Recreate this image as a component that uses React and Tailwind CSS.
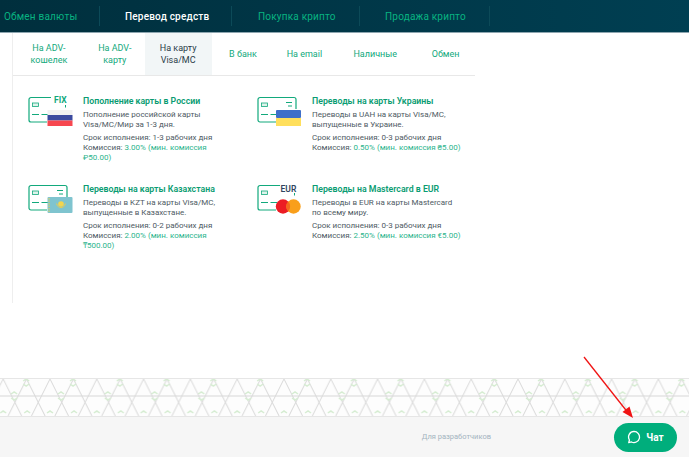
import React from "react";

const NAV = [
  { label: "Обмен валюты", w: "w-[100px]", pl: "pl-[4px]" },
  { label: "Перевод средств", w: "w-[132px]", active: true, pl: "pl-[25px]" },
  { label: "Покупка крипто", w: "w-[128px]", pl: "pl-[26px]" },
  { label: "Продажа крипто", w: "w-[130px]", pl: "pl-[25px]" },
];

const TABS = [
  { label: "На ADV-\nкошелек", w: "w-[72px]" },
  { label: "На ADV-\nкарту", w: "w-[60px]" },
  { label: "На карту\nVisa/MC", w: "w-[67px]", active: true },
  { label: "В банк", w: "w-[63px]" },
  { label: "На email", w: "w-[60px]" },
  { label: "Наличные", w: "w-[82px]" },
  { label: "Обмен", w: "w-[59px]" },
];

const CARDS = [
  {
    icon: "ru",
    title: "Пополнение карты в России",
    desc: ["Пополнение российской карты", "Visa/MC/Мир за 1-3 дня."],
    time: "1-3 рабочих дня",
    fee: ["3.00% (мин. комиссия", "₽50.00)"],
  },
  {
    icon: "ua",
    title: "Переводы на карты Украины",
    desc: ["Переводы в UAH на карты Visa/MC,", "выпущенные в Украине."],
    time: "0-3 рабочих дня",
    fee: ["0.50% (мин. комиссия ₴5.00)"],
  },
  {
    icon: "kz",
    title: "Переводы на карты Казахстана",
    desc: ["Переводы в KZT на карты Visa/MC,", "выпущенные в Казахстане."],
    time: "0-2 рабочих дня",
    fee: ["2.00% (мин. комиссия", "₸500.00)"],
  },
  {
    icon: "eur",
    title: "Переводы на Mastercard в EUR",
    desc: ["Переводы в EUR на карты Mastercard", "по всему миру."],
    time: "0-3 рабочих дня",
    fee: ["2.50% (мин. комиссия €5.00)"],
  },
];

function CardIcon({ type }) {
  const open = type === "ru" || type === "eur";
  const green = "#12a97c";
  return (
    <svg width="46" height="32" viewBox="0 0 46 32" className="shrink-0">
      {open ? (
        <path d="M23 1.500H3a2 2 0 0 0-2 2V24a2 2 0 0 0 2 2h16" fill="none" stroke={green} strokeWidth="1.200" />
      ) : (
        <path d="M19 26H3a2 2 0 0 1-2-2V3.500a2 2 0 0 1 2-2h34a2 2 0 0 1 2 2V13" fill="none" stroke={green} strokeWidth="1.200" />
      )}
      <rect x="4.500" y="7" width="6" height="3.500" fill="#dff3ec" stroke={green} strokeWidth="0.800" />
      <path d="M4 18.500h7M13.500 18.500h7" stroke={green} strokeWidth="1.200" />
      {!open && <path d="M29 6.500h6M31 10h4" stroke={green} strokeWidth="1" />}
      {open && <path d="M37.500 9v2.500" stroke={green} strokeWidth="1" />}
      {type === "ru" && (
        <>
          <text x="26" y="7" fontSize="8.500" fontWeight="700" fill={green} fontFamily="Roboto, sans-serif">FIX</text>
          <rect x="19.500" y="14" width="25" height="5.500" fill="#f1f1f1" />
          <rect x="19.500" y="19" width="25" height="5.500" fill="#3b4a9f" />
          <rect x="19.500" y="24.500" width="25" height="5.500" fill="#f7474f" />
        </>
      )}
      {type === "ua" && (
        <>
          <rect x="19" y="14" width="25" height="8" fill="#3f6fc9" rx="1" />
          <rect x="19" y="22" width="25" height="8" fill="#ffdf5c" />
        </>
      )}
      {type === "kz" && (
        <>
          <rect x="19.500" y="13" width="25" height="16" fill="#7fc4cf" rx="1" />
          <path d="M21 14v14" stroke="#f3d54e" strokeWidth="1" strokeDasharray="1.500 1" />
          <circle cx="33" cy="20" r="2.800" fill="#f3d54e" />
          <path d="M28.500 19.500c1 3 2.500 4 4.500 4s3.500-1 4.500-4" fill="none" stroke="#e7cc54" strokeWidth="1" />
        </>
      )}
      {type === "eur" && (
        <>
          <text x="23.500" y="7.500" fontSize="8.500" fontWeight="600" fill="#2f4560" fontFamily="Roboto, sans-serif">EUR</text>
          <circle cx="26" cy="22.500" r="7.200" fill="#ec1c24" />
          <circle cx="36.500" cy="22.500" r="7.200" fill="#f99f1b" />
          <path d="M31.200 17.600a7.200 7.200 0 0 1 0 9.800a7.200 7.200 0 0 1 0-9.800z" fill="#f4671f" />
        </>
      )}
    </svg>
  );
}

function Lattice() {
  // повторяющийся узор над футером
  const offsets = [-46.8, -23.4, 0, 23.4, 46.8];
  return (
    <svg width="100%" height="37" className="block">
      <defs>
        <pattern id="tri" width="46.8" height="37" patternUnits="userSpaceOnUse" x="3.200">
          {offsets.map((o) => (
            <path
              key={o}
              d={`M${o} 0L${o + 18.5} 37M${o} 0L${o - 18.5} 37`}
              fill="none"
              stroke="#dadada"
              strokeWidth="1"
            />
          ))}
          <path d="M0 17H46.800" stroke="#d8d8d8" strokeWidth="1" />
          <path
            d="M20 2l3-2l3 2M20 5l3 2l3-2M-3 34l3-2l3 2M43.800 34l3-2l3 2M21 34l3-2l3 2M8 15l3-2l3 2M8 19l3 2l3-2"
            fill="none"
            stroke="#d5ecd1"
            strokeWidth="1.500"
          />
        </pattern>
      </defs>
      <rect width="100%" height="37" fill="#fdfdfd" />
      <rect width="100%" height="37" fill="url(#tri)" />
    </svg>
  );
}

export default function App() {
  return (
    <div className="relative h-screen flex flex-col overflow-hidden bg-white font-['Roboto',sans-serif]">
      <div className="h-[33px] shrink-0 flex bg-gradient-to-r from-[#002f3d] to-[#003f52] border-b border-[#8ea6b0]">
        {NAV.map((n) => (
          <div
            key={n.label}
            className={`${n.w} ${n.pl} my-[6px] flex items-center border-r border-[#0c4a58] text-[10px] tracking-[0.2px] whitespace-nowrap ${
              n.active ? "text-white font-medium" : "text-[#08b381]"
            }`}
          >
            {n.label}
          </div>
        ))}
      </div>

      <div className="flex-1 min-h-0">
        <div className="ml-[12px] w-[463px] h-[270px] border-l border-[#eeeeee]">
          <div className="flex h-[43px] border-b border-[#e8e8e8]">
            {TABS.map((t) => (
              <div
                key={t.label}
                className={`${t.w} flex items-center justify-center text-center whitespace-pre-line text-[9px] leading-[12px] ${
                  t.active ? "bg-[#f2f6f7] text-[#2a3c48]" : "text-[#12a97c]"
                }`}
              >
                {t.label}
              </div>
            ))}
          </div>
          <div className="grid grid-cols-[229px_229px] auto-rows-[88px] pt-[20px] pl-[15px]">
            {CARDS.map((c) => (
              <div key={c.title} className="flex gap-[9px]">
                <CardIcon type={c.icon} />
                <div className="text-[8px] leading-[10px] text-[#4e5a63] whitespace-nowrap -mt-[1px]">
                  <div className="text-[8.750px] leading-[12px] font-semibold text-[#0a9c72] mb-[3px]">{c.title}</div>
                  {c.desc.map((d) => (
                    <div key={d}>{d}</div>
                  ))}
                  <div className="mt-[3px]">Срок исполнения: {c.time}</div>
                  <div>
                    Комиссия: <span className="text-[#2bb48c]">{c.fee[0]}</span>
                  </div>
                  {c.fee[1] && <div className="text-[#2bb48c]">{c.fee[1]}</div>}
                </div>
              </div>
            ))}
          </div>
        </div>
      </div>

      <div className="shrink-0 border-t border-[#e6e6e6]">
        <Lattice />
      </div>
      <div className="h-[41px] shrink-0 bg-[#f6f6f6] border-t border-[#e6e6e6] flex items-center justify-end pr-[12px]">
        <span className="text-[7.500px] text-[#a3b4c0] mr-[123px]">Для разработчиков</span>
        <div className="w-[63px] h-[29px] rounded-full bg-[#00ae7c] flex items-center justify-center gap-[5px] text-white text-[10px] font-bold">
          <svg width="14" height="14" viewBox="0 0 24 24" fill="none" stroke="white" strokeWidth="2.200" strokeLinejoin="round">
            <path d="M12 2.500a9.500 9.500 0 1 1-4.300 18L3 21.500l1.200-4.400A9.500 9.500 0 0 1 12 2.500z" />
          </svg>
          Чат
        </div>
      </div>

      <svg width="60" height="70" viewBox="0 0 60 70" className="absolute left-[580px] top-[353px] pointer-events-none">
        <path d="M4 4L49 61" stroke="#f01414" strokeWidth="1.300" />
        <path d="M53 65L42.500 59L49.500 53.500z" fill="#f01414" />
      </svg>
    </div>
  );
}
